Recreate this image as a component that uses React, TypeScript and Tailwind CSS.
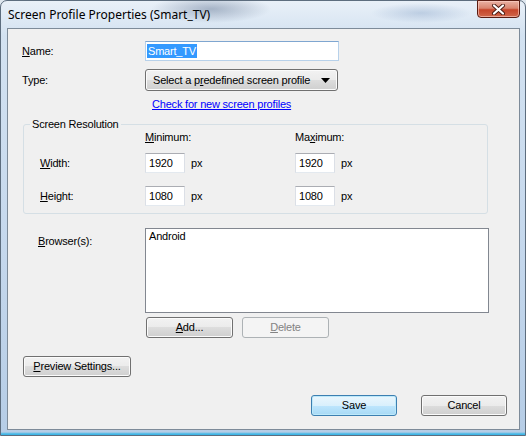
import React from "react";

const btn =
  "h-[21px] rounded-[3px] border border-[#707070] bg-[linear-gradient(to_bottom,#f2f2f2_0%,#ebebeb_50%,#dddddd_50%,#cfcfcf_100%)] shadow-[inset_0_0_0_1px_#fbfbfb] flex items-center justify-center text-[11px] text-black";

const tb =
  "h-[20px] bg-white border border-[#dbdfe6] border-t-[#abadb3] border-b-[#e3e9ef] flex items-center pl-[3px]";

export default function App() {
  return (
    <div className="w-[526px] h-[436px] bg-[#dfe7ef] overflow-hidden font-['Liberation_Sans',sans-serif]">
      <div className="w-[526px] h-[436px] rounded-t-[7px] border border-[#5d6d7e] bg-[radial-gradient(ellipse_60px_14px_at_210px_8px,rgba(90,110,140,0.45),transparent),radial-gradient(ellipse_50px_10px_at_420px_12px,rgba(120,150,190,0.35),transparent),linear-gradient(to_bottom,#e9f0f8_0%,#d3e2f1_8%,#c4d7ec_60%,#b6cde6_calc(100%-3px),#3fb6e6_calc(100%-1px))] flex flex-col pl-[6px] pr-[5px] pb-[5px]">
        {/* title bar */}
        <div className="h-[27px] flex items-start justify-between">
          <span className="pt-[6px] pl-[1px] text-[12px] leading-[16px] text-black font-['Noto_Sans',sans-serif]">
            Screen Profile Properties (Smart_TV)
          </span>
          <div className="-mt-px w-[43px] h-[18px] rounded-b-[4px] border border-[#5a1c12] bg-[linear-gradient(to_bottom,#eab2a4_0%,#d98570_45%,#c6452a_55%,#d0674b_100%)] shadow-[inset_0_0_0_1px_rgba(255,210,200,0.6)] flex items-center justify-center">
            <svg width="15" height="11" viewBox="0 0 15 11">
              <path d="M3 1.5 L12 9.5 M12 1.5 L3 9.5" stroke="#4a1a12" strokeWidth="4" strokeLinecap="round" />
              <path d="M3 1.5 L12 9.5 M12 1.5 L3 9.5" stroke="#ffffff" strokeWidth="2.2" strokeLinecap="round" />
            </svg>
          </div>
        </div>

        {/* client area */}
        <div className="flex-1 bg-[#f0f0f0] border border-[#7d8b99] flex flex-col text-[11px] leading-[13px] tracking-[-0.2px] text-black">
          {/* Name */}
          <div className="flex items-center mt-[12px] h-[20px]">
            <span className="w-[137px] pl-[14px]">
              <u>N</u>ame:
            </span>
            <div className="w-[194px] h-[20px] bg-white border border-[#b7d1ea] border-t-[#7fa6d0] flex items-center pl-px">
              <span className="bg-[#3399ff] text-white pl-px pr-[1px] leading-[14px]">Smart_TV</span>
            </div>
          </div>

          {/* Type */}
          <div className="flex items-center mt-[8px] h-[22px]">
            <span className="w-[137px] pl-[14px]">Type:</span>
            <div className={btn + " w-[193px] h-[22px] !justify-start pl-[7px] pr-[4px]"}>
              <span className="flex-1">
                Select a p<u>r</u>edefined screen profile
              </span>
              <svg width="9" height="5" viewBox="0 0 9 5" className="mr-[3px]">
                <path d="M0 0 H9 L4.5 5 Z" fill="#000" />
              </svg>
            </div>
          </div>

          {/* Link */}
          <div className="mt-[7px] pl-[144px] h-[13px]">
            <span className="text-[#0000ff] underline">Check for new screen profiles</span>
          </div>

          {/* Group box */}
          <div className="relative mt-[13px] ml-[15px] w-[465px] h-[90px] rounded-[3px] border border-[#d5dfe5] flex flex-col">
            <span className="absolute -top-[7px] left-[6px] bg-[#f0f0f0] px-[2px]">Screen Resolution</span>
            <div className="flex mt-[6px] h-[13px]">
              <span className="w-[121px]" />
              <span className="w-[150px]">
                <u>M</u>inimum:
              </span>
              <span>
                Ma<u>x</u>imum:
              </span>
            </div>
            <div className="flex items-center mt-[9px] h-[20px]">
              <span className="w-[121px] pl-[16px]">
                <u>W</u>idth:
              </span>
              <div className="w-[150px] flex items-center">
                <div className={tb + " w-[40px]"}>1920</div>
                <span className="ml-[6px]">px</span>
              </div>
              <div className="flex items-center">
                <div className={tb + " w-[40px]"}>1920</div>
                <span className="ml-[6px]">px</span>
              </div>
            </div>
            <div className="flex items-center mt-[13px] h-[20px]">
              <span className="w-[121px] pl-[16px]">
                <u>H</u>eight:
              </span>
              <div className="w-[150px] flex items-center">
                <div className={tb + " w-[40px]"}>1080</div>
                <span className="ml-[6px]">px</span>
              </div>
              <div className="flex items-center">
                <div className={tb + " w-[40px]"}>1080</div>
                <span className="ml-[6px]">px</span>
              </div>
            </div>
          </div>

          {/* Browsers */}
          <div className="flex mt-[14px]">
            <span className="w-[137px] pl-[30px] pt-[7px]">
              <u>B</u>rowser(s):
            </span>
            <div className="w-[344px] h-[85px] bg-white border border-[#828790] pl-[3px] pt-[1px]">Android</div>
          </div>

          <div className="flex mt-[4px] pl-[138px]">
            <div className={btn + " w-[87px]"}>
              <span>
                <u>A</u>dd...
              </span>
            </div>
            <div className="ml-[9px] w-[87px] h-[21px] rounded-[3px] border border-[#adb2b5] bg-[#f4f4f4] flex items-center justify-center text-[#838383]">
              <span>
                <u>D</u>elete
              </span>
            </div>
          </div>

          {/* Preview */}
          <div className="flex mt-[18px] pl-[15px]">
            <div className={btn + " w-[108px]"}>
              <span>
                <u>P</u>review Settings...
              </span>
            </div>
          </div>

          {/* Save / Cancel */}
          <div className="flex mt-[18px] pl-[303px]">
            <div className="w-[86px] h-[21px] rounded-[3px] border border-[#3c7fb1] bg-[linear-gradient(to_bottom,#eaf6fd_0%,#d9f0fc_50%,#bee6fd_50%,#a7d9f5_100%)] shadow-[inset_0_0_0_1px_#bde9fa] flex items-center justify-center">
              Save
            </div>
            <div className={btn + " ml-[24px] w-[86px]"}>Cancel</div>
          </div>
        </div>
      </div>
    </div>
  );
}
